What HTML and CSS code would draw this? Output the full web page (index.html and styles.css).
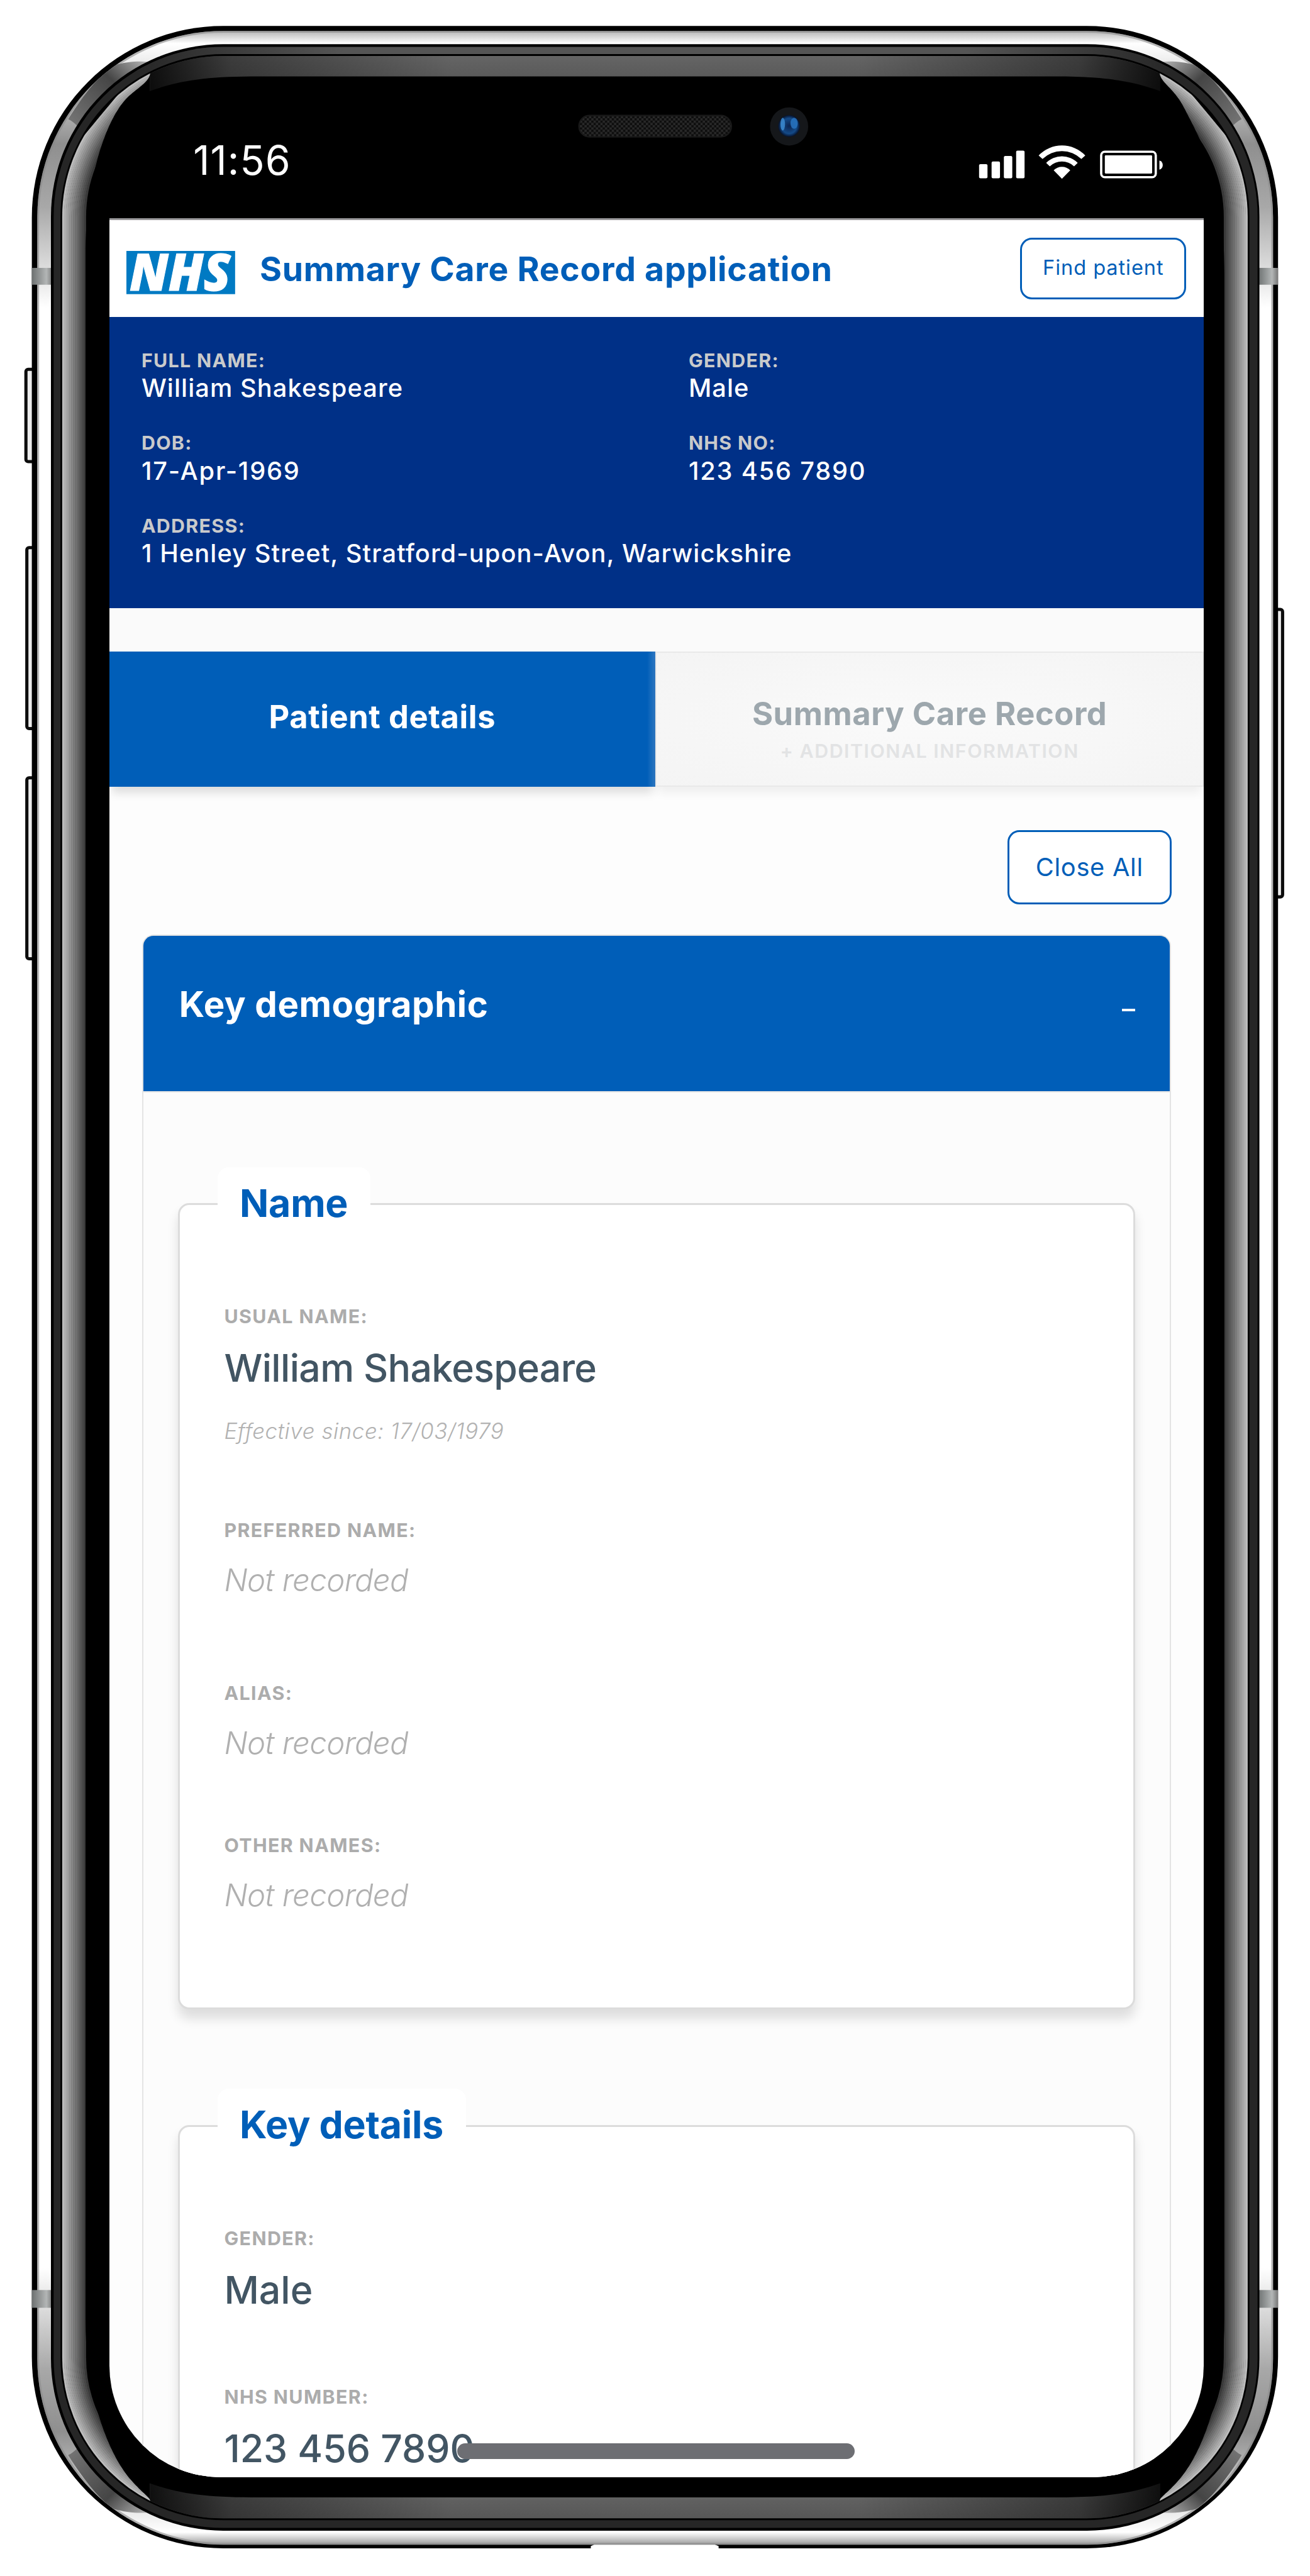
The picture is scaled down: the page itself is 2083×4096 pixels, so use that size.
FILE: index.html
```html
<!DOCTYPE html>
<html lang="en">
<head>
<meta charset="utf-8">
<title>Summary Care Record application</title>
<link rel="stylesheet" href="styles.css">
</head>
<body>
<div class="device">
  <svg class="frame" viewBox="0 0 2880 5664" aria-hidden="true">
    <defs>
      <linearGradient id="silver" x1="0" y1="0" x2="0" y2="1">
        <stop offset="0" stop-color="#b5b5b5"/><stop offset="0.005" stop-color="#fff"/>
        <stop offset="0.014" stop-color="#e8e8e8"/><stop offset="0.045" stop-color="#8f8f8f"/>
        <stop offset="0.07" stop-color="#a8a8a8"/><stop offset="0.11" stop-color="#fff"/>
        <stop offset="0.89" stop-color="#fff"/><stop offset="0.93" stop-color="#a8a8a8"/>
        <stop offset="0.955" stop-color="#8f8f8f"/><stop offset="0.986" stop-color="#e8e8e8"/>
        <stop offset="0.995" stop-color="#fff"/><stop offset="1" stop-color="#999"/>
      </linearGradient>
      <linearGradient id="bezelTop" x1="0" y1="0" x2="0" y2="1">
        <stop offset="0" stop-color="#686868"/><stop offset="1" stop-color="#525252"/>
      </linearGradient>
      <linearGradient id="fade" gradientUnits="userSpaceOnUse" x1="330" y1="0" x2="2550" y2="0">
        <stop offset="0" stop-color="#000" stop-opacity="0.85"/><stop offset="0.08" stop-color="#000" stop-opacity="0.4"/>
        <stop offset="0.3" stop-color="#000" stop-opacity="0"/><stop offset="0.7" stop-color="#000" stop-opacity="0"/>
        <stop offset="0.92" stop-color="#000" stop-opacity="0.4"/><stop offset="1" stop-color="#000" stop-opacity="0.85"/>
      </linearGradient>
      <linearGradient id="rim" gradientUnits="userSpaceOnUse" x1="300" y1="0" x2="2580" y2="0">
        <stop offset="0" stop-color="#262626"/><stop offset="0.2" stop-color="#555"/>
        <stop offset="0.8" stop-color="#555"/><stop offset="1" stop-color="#262626"/>
      </linearGradient>
      <linearGradient id="patch" x1="1" y1="0" x2="0" y2="1">
        <stop offset="0" stop-color="#b5b5b5"/><stop offset="0.35" stop-color="#454545"/><stop offset="1" stop-color="#7d7d7d"/>
      </linearGradient>
      <linearGradient id="band" x1="0" y1="0" x2="1" y2="0">
        <stop offset="0" stop-color="#6d7171"/><stop offset="0.7" stop-color="#b3b6b6"/><stop offset="1" stop-color="#777"/>
      </linearGradient>
      <radialGradient id="lens">
        <stop offset="0" stop-color="#0c2450"/><stop offset="0.7" stop-color="#144a88"/><stop offset="1" stop-color="#06112a"/>
      </radialGradient>
      <pattern id="mesh" width="10" height="10" patternUnits="userSpaceOnUse">
        <rect width="10" height="10" fill="#0e0e0e"/>
        <path d="M0 0h5v5h-5zM5 5h5v5h-5z" fill="#282828"/>
      </pattern>
      <clipPath id="sides">
        <path d="M100 2832V400L330 123V163C325 184 296 196 275 220C234 266 188 390 188 560V5100C188 5270 240 5400 290 5455C312 5480 328 5490 330 5497V5560H100Z"/>
        <path d="M2780 2832V400L2550 123V163C2555 184 2584 196 2605 240C2646 320 2692 400 2692 600V5100C2692 5270 2640 5400 2590 5455C2568 5480 2552 5490 2550 5497V5560H2780Z"/>
      </clipPath>
      <clipPath id="inner"><rect x="137" y="123" width="2606" height="5414" rx="354"/></clipPath>
      <clipPath id="ring"><rect x="118" y="103" width="2647" height="5455" rx="373"/></clipPath>
      <clipPath id="metal"><rect x="82" y="68" width="2717" height="5527" rx="409"/></clipPath>
    </defs>

    <g class="side-buttons">
      <rect x="57" y="812" width="24" height="203" rx="5"/>
      <rect x="59" y="1204" width="24" height="398" rx="5"/>
      <rect x="59" y="1710" width="24" height="398" rx="5"/>
      <rect x="2795" y="1340" width="25" height="632" rx="5"/>
    </g>

    <rect x="70" y="57" width="2740" height="5546" rx="421"/>
    <path d="M1299 5598L1312 5592H1566L1580 5598V5606H1299Z" fill="#fff"/>
    <rect x="82" y="68" width="2717" height="5527" rx="409" fill="url(#silver)"/>
    <rect x="84" y="70" width="2713" height="5523" rx="407" fill="none" stroke="#888" stroke-width="4" opacity="0.6"/>
    <g clip-path="url(#metal)">
      <path id="shine" d="M150 262C185 205 225 158 250 144C275 136 305 134 326 136L326 170L190 300C180 290 168 270 150 262Z" fill="url(#patch)"/>
      <use href="#shine" transform="matrix(-1 0 0 1 2880 0)"/>
      <use href="#shine" transform="matrix(1 0 0 -1 0 5660)"/>
      <use href="#shine" transform="matrix(-1 0 0 -1 2880 5660)"/>
    </g>
    <rect x="70" y="589" width="46" height="37" fill="url(#band)"/>
    <rect x="2766" y="589" width="44" height="37" fill="url(#band)"/>
    <rect x="70" y="5035" width="46" height="39" fill="url(#band)"/>
    <rect x="2766" y="5035" width="44" height="39" fill="url(#band)"/>
    <rect x="112" y="97" width="2657" height="5467" rx="379"/>
    <rect x="118" y="103" width="2647" height="5455" rx="373" fill="#262626"/>
    <path d="M300 200V103H2580V200Z" fill="url(#rim)" clip-path="url(#ring)"/>
    <rect x="133" y="119" width="2614" height="5422" rx="358"/>

    <g clip-path="url(#inner)">
      <path d="M330 200C400 175 460 168 570 168H2310C2420 168 2480 175 2550 200V110H330Z" fill="url(#bezelTop)"/>
      <path d="M330 5460C400 5485 460 5491 570 5491H2310C2420 5491 2480 5485 2550 5460V5560H330Z" fill="url(#bezelTop)"/>
      <path d="M330 110H2550V210H330ZM330 5450H2550V5550H330Z" fill="url(#fade)"/>
    </g>
    <g clip-path="url(#sides)" fill="none" stroke-width="4.6">
      <rect x="139" y="125" width="2602" height="5410" rx="352" stroke="#bcbcbc"/>
      <rect x="143" y="129" width="2594" height="5402" rx="348" stroke="#b0b0b0"/>
      <rect x="147" y="133" width="2586" height="5394" rx="344" stroke="#a6a6a6"/>
      <rect x="151" y="137" width="2578" height="5386" rx="340" stroke="#9c9c9c"/>
      <rect x="155" y="141" width="2570" height="5378" rx="336" stroke="#929292"/>
      <rect x="159" y="145" width="2562" height="5370" rx="332" stroke="#888"/>
      <rect x="163" y="149" width="2554" height="5362" rx="328" stroke="#7d7d7d"/>
      <rect x="167" y="153" width="2546" height="5354" rx="324" stroke="#727272"/>
      <rect x="171" y="157" width="2538" height="5346" rx="320" stroke="#686868"/>
      <rect x="175" y="161" width="2530" height="5338" rx="316" stroke="#5c5c5c"/>
      <rect x="179" y="165" width="2522" height="5330" rx="312" stroke="#515151"/>
      <rect x="183" y="169" width="2514" height="5322" rx="308" stroke="#474747"/>
      <rect x="187" y="173" width="2506" height="5314" rx="304" stroke="#3a3a3a"/>
    </g>

    <rect x="1273" y="254" width="335" height="47" rx="23" fill="url(#mesh)" stroke="#191919" stroke-width="3"/>
    <circle cx="1735" cy="278" r="42" fill="#15171a"/>
    <circle cx="1735" cy="277" r="24" fill="url(#lens)"/>
    <ellipse cx="1721" cy="273" rx="5" ry="14" fill="#3f8ed6" opacity="0.8"/>
    <ellipse cx="1746" cy="271" rx="8" ry="12" fill="#2874c2" opacity="0.85"/>
  </svg>

  <div class="status">
    <span class="time">11:56</span>
    <svg class="status-icons" viewBox="2150 318 410 78" fill="#fff" role="img" aria-label="Signal, Wi-Fi, battery">
      <rect x="2152.5" y="361" width="18.5" height="31" rx="3"/>
      <rect x="2180" y="355" width="18.5" height="37" rx="3"/>
      <rect x="2207" y="343" width="18.5" height="49" rx="3"/>
      <rect x="2234" y="331" width="18.5" height="61" rx="3"/>
      <path d="M2283.5 341.7A71 71 0 0 1 2386 341.7L2377.4 349.5A61 61 0 0 0 2292 349.5Z"/>
      <path d="M2300 358A49 49 0 0 1 2369.4 358L2361.4 365.7A38.7 38.7 0 0 0 2308 365.7Z"/>
      <path d="M2316.5 374.5A25 25 0 0 1 2353 374.5L2334.7 393Z"/>
      <rect x="2421" y="333.5" width="120" height="56" rx="8" fill="none" stroke="#fff" stroke-width="5"/>
      <rect x="2429" y="341.5" width="104" height="40" rx="2"/>
      <path d="M2549 353A10.5 10.5 0 0 1 2549 373Z"/>
    </svg>
  </div>

  <div class="screen">
    <header class="app-header">
      <svg class="logo" viewBox="0 0 239 95" role="img" aria-label="NHS">
        <rect width="239" height="95" fill="#007ac3"/>
        <text x="7" y="87" textLength="222" lengthAdjust="spacingAndGlyphs">NHS</text>
      </svg>
      <h1 class="app-title">Summary Care Record application</h1>
      <button class="btn btn-find">Find patient</button>
    </header>

    <dl class="banner">
      <div><dt>FULL NAME:</dt><dd>William Shakespeare</dd></div>
      <div><dt>GENDER:</dt><dd>Male</dd></div>
      <div><dt>DOB:</dt><dd class="digits">17-Apr-1969</dd></div>
      <div><dt>NHS NO:</dt><dd class="digits">123 456 7890</dd></div>
      <div class="wide"><dt>ADDRESS:</dt><dd>1 Henley Street, Stratford-upon-Avon, Warwickshire</dd></div>
    </dl>

    <nav class="tabs">
      <a class="tab tab-active">Patient details</a>
      <a class="tab tab-idle">Summary Care Record<small>+ ADDITIONAL INFORMATION</small></a>
    </nav>

    <div class="toolbar"><button class="btn btn-close">Close All</button></div>

    <section class="accordion">
      <div class="accordion-head"><h2>Key demographic</h2><span class="minus"></span></div>
      <div class="card card-name">
        <h3>Name</h3>
        <div class="field"><span class="label">USUAL NAME:</span><span class="value full-name">William Shakespeare</span><em class="since">Effective since: 17/03/1979</em></div>
        <div class="field preferred"><span class="label">PREFERRED NAME:</span><em class="empty">Not recorded</em></div>
        <div class="field alias"><span class="label">ALIAS:</span><em class="empty">Not recorded</em></div>
        <div class="field others"><span class="label">OTHER NAMES:</span><em class="empty">Not recorded</em></div>
      </div>
      <div class="card card-details">
        <h3>Key details</h3>
        <div class="field"><span class="label">GENDER:</span><span class="value">Male</span></div>
        <div class="field number"><span class="label">NHS NUMBER:</span><span class="value">123 456 7890</span></div>
      </div>
    </section>
    <div class="home-bar"></div>
  </div>
</div>
</body>
</html>
```
FILE: styles.css
```css
/* 1rem = 100 design units; the design is 28.8rem x 56.64rem */
html { font-size: 72.32px; }
* { box-sizing: border-box; }
body {
  margin: 0;
  background: #fff;
  font-family: Inter, "Liberation Sans", sans-serif;
  font-size: 0.42rem;
  overflow: hidden;
}
h1, h2, h3, dl, dt, dd { margin: 0; }

.device {
  position: relative;
  width: 28.8rem;
  height: 56.63rem;
  padding: 0 2.33rem 0 2.4rem;
  overflow: hidden;
}
.frame { position: absolute; inset: 0; width: 28.8rem; height: 56.64rem; }
.side-buttons rect { fill: #ececec; stroke: #0c0c0c; stroke-width: 7; }

.status {
  position: relative;
  display: flex;
  justify-content: space-between;
  height: 4.8rem;
  padding: 3.09rem 0.87rem 0 1.85rem;
  color: #fff;
}
.time { font-size: 0.89rem; line-height: 1; letter-spacing: 0.015rem; }
.status-icons { width: 4.1rem; height: 0.78rem; margin-top: 0.09rem; }

.screen {
  position: relative;
  height: 49.66rem;
  border-top: 0.045rem solid #9c9b9d;
  border-radius: 0 0 2.45rem 2.45rem;
  background: #fdfdfd;
  overflow: hidden;
}

.app-header {
  display: flex;
  align-items: center;
  height: 2.13rem;
  padding: 0 0.385rem 0 0.38rem;
  background: #fff;
}
.logo { width: 2.39rem; height: 0.95rem; margin-top: 0.17rem; overflow: visible; }
.logo text { font: italic 800 112px "Open Sans", sans-serif; fill: #fff; stroke: #fff; stroke-width: 1.5; }
.app-title {
  margin: 0.03rem 0 0 0.54rem;
  color: #005eb8;
  font-size: 0.74rem;
  font-weight: 700;
  line-height: 1;
  letter-spacing: 0.01rem;
  white-space: nowrap;
}

.btn {
  padding: 0;
  border: 0.045rem solid #005eb8;
  border-radius: 0.26rem;
  background: #fff;
  color: #005eb8;
  font-family: inherit;
}
.btn-find {
  width: 3.655rem;
  height: 1.365rem;
  margin-left: auto;
  padding-bottom: 0.06rem;
  font-size: 0.45rem;
  letter-spacing: 0.013rem;
}
.btn-close { width: 3.605rem; height: 1.633rem; font-size: 0.55rem; letter-spacing: 0.01rem; }

.banner {
  display: grid;
  grid-template-columns: 12.03rem 1fr;
  align-content: start;
  row-gap: 0.72rem;
  height: 6.4rem;
  padding: 0.745rem 0 0 0.71rem;
  background: #003087;
  color: #fff;
}
.banner .wide { grid-column: 1 / -1; }
.banner dt { color: #c9cacb; font-size: 0.42rem; font-weight: 700; line-height: 1; letter-spacing: 0.018rem; }
.banner dd { margin-top: 0.125rem; font-size: 0.55rem; font-weight: 500; line-height: 1; letter-spacing: 0.015rem; }
.banner .digits { letter-spacing: 0.025rem; }

.tabs { display: flex; height: 3.925rem; padding-top: 0.96rem; background: linear-gradient(#fafafa 50%, #fdfdfd); }
.tab {
  flex: 1;
  height: 2.965rem;
  font-size: 0.7rem;
  font-weight: 700;
  line-height: 1;
  letter-spacing: 0.008rem;
  text-align: center;
  box-shadow: 0 0.2rem 0.2rem -0.06rem rgba(0, 0, 0, 0.13);
}
.tab-active { padding-top: 1.08rem; background: linear-gradient(to right, #005eb8 98.5%, #2f78c2); color: #fff; }
.tab-idle {
  padding-top: 0.99rem;
  border: 0.035rem solid #e9e9e9;
  background: radial-gradient(#fafafa, #f4f4f4);
  color: #9da7ad;
  box-shadow: 0 0.2rem 0.2rem -0.06rem rgba(0, 0, 0, 0.06);
}
.tab small {
  display: block;
  margin-top: 0.26rem;
  color: #e2e3e4;
  font-size: 0.42rem;
  font-weight: 600;
  line-height: 1;
  letter-spacing: 0.021rem;
}

.toolbar { display: flex; justify-content: flex-end; padding: 0.95rem 0.715rem 0.67rem 0; }

.accordion {
  width: 22.63rem;
  margin-left: 0.72rem;
  border: 0.04rem solid #e4e4e4;
  border-radius: 0.26rem;
  background: #fcfcfc;
}
.accordion-head {
  display: flex;
  justify-content: space-between;
  height: 3.435rem;
  padding: 1.115rem 0.77rem 0 0.79rem;
  border-bottom: 0.04rem solid #e4e4e4;
  border-radius: 0.22rem 0.22rem 0 0;
  background: #005eb8;
  color: #fff;
}
.accordion-head h2 { font-size: 0.78rem; font-weight: 700; line-height: 1; letter-spacing: 0.008rem; }
.minus { width: 0.285rem; height: 0.055rem; margin-top: 0.49rem; background: #fff; }

.card {
  margin: 2.445rem 0.77rem 0;
  border: 0.045rem solid #dcdcdc;
  border-radius: 0.25rem;
  background: #fff;
  box-shadow: 0 0.2rem 0.25rem rgba(0, 0, 0, 0.12);
}
.card-name { height: 17.72rem; }
.card-details { height: 12rem; margin-top: 2.55rem; }
.card h3 {
  width: fit-content;
  margin: -0.84rem 0 1.475rem 0.82rem;
  padding: 0 0.49rem;
  border-radius: 0.25rem;
  background: #fff;
  color: #005eb8;
  font-size: 0.84rem;
  font-weight: 700;
  line-height: 1.6rem;
  letter-spacing: -0.003rem;
}
.field { display: flex; flex-direction: column; padding-left: 0.97rem; line-height: 1; white-space: nowrap; }
.label { color: #acacac; font-size: 0.42rem; font-weight: 700; line-height: 1; letter-spacing: 0.019rem; }
.value { margin-top: 0.505rem; color: #425563; font-size: 0.84rem; font-weight: 500; letter-spacing: 0; }
.full-name { letter-spacing: -0.009rem; }
.since { margin-top: 0.72rem; color: #b2b2b2; font-size: 0.48rem; font-weight: 300; letter-spacing: 0.009rem; }
.empty { margin-top: 0.545rem; color: #b0b0b0; font-size: 0.68rem; font-weight: 300; letter-spacing: -0.009rem; }
.preferred { margin-top: 1.74rem; }
.alias { margin-top: 1.94rem; }
.others { margin-top: 1.7rem; }
.number { margin-top: 1.72rem; }

.home-bar {
  position: absolute;
  left: 7.65rem;
  bottom: 0.4rem;
  width: 8.74rem;
  height: 0.346rem;
  border-radius: 0.173rem;
  background: #6d6e73;
}
```
